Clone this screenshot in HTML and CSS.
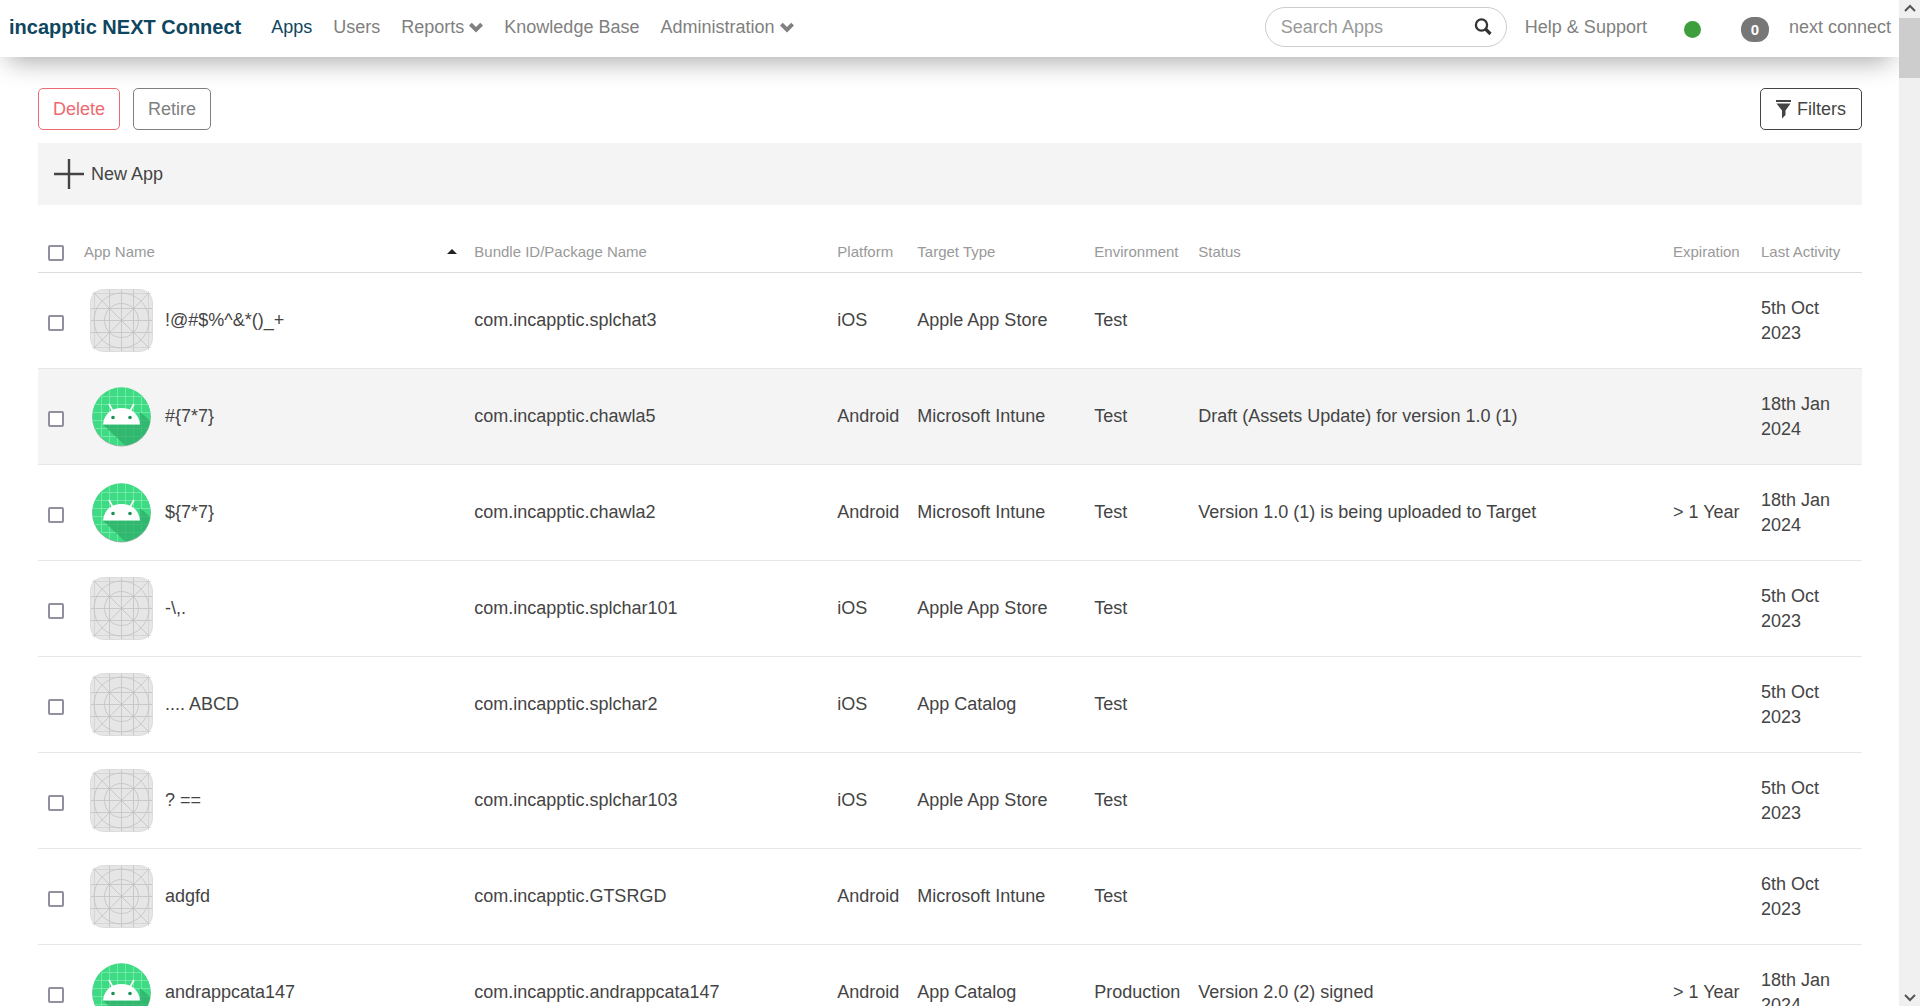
FILE: index.html
```html
<!DOCTYPE html>
<html lang="en">
<head>
  <meta charset="UTF-8">
  <meta name="viewport" content="width=device-width, initial-scale=1.0">
  <title>Apps - incapptic NEXT Connect</title>
  <link rel="stylesheet" href="styles.css">
</head>
<body>

  <!-- shared icons -->
  <svg class="sprite" aria-hidden="true">
    <symbol id="chevron" viewBox="0 0 14 11">
      <path d="M0 3.6 L2.8 0.8 L7 5 L11.2 0.8 L14 3.6 L7 10.4 Z"/>
    </symbol>
    <symbol id="placeholder" viewBox="0 0 63 63">
      <rect x="0.5" y="0.5" width="62" height="62" rx="13" fill="#e6e6e6" stroke="#dcdcdc"/>
      <g fill="none" stroke="#c2c2c2" stroke-width="0.8">
        <path d="M19.5 1V62M31.5 1V62M43.5 1V62M1 19.5H62M1 31.5H62M1 43.5H62M4 4L59 59M59 4L4 59"/>
        <path d="M4.5 2V61M58.5 2V61M2 4.5H61M2 58.5H61" stroke="#d0d0d0"/>
        <circle cx="31.5" cy="31.5" r="27.5"/>
        <circle cx="31.5" cy="31.5" r="17"/>
      </g>
    </symbol>
    <symbol id="android" viewBox="0 0 63 63">
      <circle cx="31.5" cy="32.3" r="29.3" fill="#a9aeab"/>
      <circle cx="31.5" cy="31.5" r="29.2" fill="#3ddc84"/>
      <path d="M11.5 11.5V52M19.5 5.5V58M27.5 3V60.5M35.5 3V60.5M43.5 5.5V58M51.5 11.5V52M11.5 11.5H52M5.5 19.5H58M3 27.5H60.5M3 35.5H60.5M4.5 43.5H58.5M11.5 51.5H52" stroke="#7eeab0" stroke-width="0.8" fill="none"/>
      <path d="M13 39.5L35 60.5A29.2 29.2 0 0 0 60.2 36L50 27V39.5Z" fill="#2ba866" opacity="0.7"/>
      <path d="M13 39.5C14 29 21.5 23 31.5 23S49 29 50 39.5Z" fill="#fff"/>
      <path d="M22.8 26L19 19M40.2 26L44 19" stroke="#fff" stroke-width="1.6"/>
      <circle cx="23" cy="32.5" r="1.8" fill="#1f8f57"/>
      <circle cx="40" cy="32.5" r="1.8" fill="#1f8f57"/>
    </symbol>
  </svg>

  <div class="page">
    <header class="navbar">
      <a href="#" class="brand">incapptic NEXT Connect</a>
      <nav class="menu">
        <a href="#" class="active">Apps</a>
        <a href="#">Users</a>
        <a href="#">Reports <svg class="chevron"><use href="#chevron"/></svg></a>
        <a href="#">Knowledge Base</a>
        <a href="#">Administration <svg class="chevron"><use href="#chevron"/></svg></a>
      </nav>
      <form class="search">
        <input type="text" placeholder="Search Apps" aria-label="Search Apps">
        <button type="button" aria-label="Search">
          <svg viewBox="0 0 18 18"><circle cx="7.5" cy="7" r="5.6" fill="none" stroke="#333" stroke-width="2.3"/><path d="M11.5 11L16.5 16" stroke="#333" stroke-width="3.2"/></svg>
        </button>
      </form>
      <a href="#" class="help">Help &amp; Support</a>
      <span class="dot"></span>
      <span class="badge">0</span>
      <a href="#" class="user">next connect</a>
    </header>

    <main class="content">
      <div class="toolbar">
        <button type="button" class="btn btn-delete">Delete</button>
        <button type="button" class="btn btn-retire">Retire</button>
        <button type="button" class="btn btn-filters">
          <svg viewBox="0 0 15 19"><path d="M0 0H15V2H0ZM0.5 3.5H14.5L9.5 10.5V15L6 18.5V10.5Z"/></svg>Filters
        </button>
      </div>

      <a href="#" class="new-app">
        <svg viewBox="0 0 30 30"><path d="M15 0V30M0 15H30" stroke="#444" stroke-width="2.4"/></svg>
        New App
      </a>

      <table class="apps">
        <thead>
          <tr>
            <th class="col-check"><input type="checkbox" aria-label="Select all"></th>
            <th class="col-name"><div class="sorted">App Name<span class="arrow"></span></div></th>
            <th class="col-bundle">Bundle ID/Package Name</th>
            <th class="col-platform">Platform</th>
            <th class="col-target">Target Type</th>
            <th class="col-env">Environment</th>
            <th>Status</th>
            <th class="col-exp">Expiration</th>
            <th class="col-last">Last Activity</th>
          </tr>
        </thead>
        <tbody id="rows"></tbody>
      </table>
    </main>
  </div>

  <div class="scrollbar">
    <svg viewBox="0 0 12 8"><path d="M1 7L6 2L11 7"/></svg>
    <div class="thumb"></div>
    <svg class="down" viewBox="0 0 12 8"><path d="M1 1L6 6L11 1"/></svg>
  </div>

  <script src="script.js"></script>
</body>
</html>
```

FILE: styles.css
```css
* {
  box-sizing: border-box;
}

body {
  margin: 0;
  display: flex;
  height: 100vh;
  overflow: hidden;
  font-family: "Liberation Sans", Arial, sans-serif;
  font-size: 18px;
  line-height: 25px;
  color: #444;
  background-color: #fff;
}

a {
  color: inherit;
  text-decoration: none;
}

button,
input {
  font: inherit;
  color: inherit;
}

.sprite {
  display: none;
}

.page {
  flex: 1;
  min-width: 0;
  overflow: hidden;
}

/* top bar */
.navbar {
  display: flex;
  align-items: center;
  height: 57px;
  padding: 0 8px 3px 9px;
  color: #808080;
  background-color: #fff;
  box-shadow: 0 12px 26px -8px rgba(0, 0, 0, 0.35);
  white-space: nowrap;
}

.brand {
  margin-right: 30px;
  font-size: 20px;
  font-weight: bold;
  color: #0e4660;
}

.menu {
  display: flex;
  gap: 21px;
  margin-right: auto;
}

.menu .active {
  color: #0e4660;
}

.chevron {
  width: 14px;
  height: 11px;
  fill: #808080;
}

.search {
  display: flex;
  align-items: center;
  width: 242px;
  height: 40px;
  padding: 0 14px 0 15px;
  border: 1px solid #ccc;
  border-radius: 20px;
}

.search input {
  flex: 1;
  min-width: 0;
  padding: 0;
  border: none;
  outline: none;
  background: none;
}

.search input::placeholder {
  color: #999;
  opacity: 1;
}

.search button {
  display: flex;
  padding: 0;
  border: none;
  background: none;
}

.search svg {
  width: 18px;
  height: 18px;
}

.help {
  margin-left: 18px;
}

.dot {
  width: 17px;
  height: 17px;
  margin: 4px 40px 0 37px;
  border-radius: 50%;
  background-color: #3c9e3c;
}

.badge {
  width: 28px;
  margin: 4px 20px 0 0;
  border-radius: 12px;
  font-size: 15px;
  font-weight: bold;
  text-align: center;
  color: #fff;
  background-color: #777;
}

/* content */
.content {
  padding: 31px 37px 0 38px;
}

.toolbar {
  display: flex;
  gap: 13px;
  margin-bottom: 13px;
}

.btn {
  height: 42px;
  padding: 0 14px;
  border: 1px solid;
  border-radius: 5px;
  background-color: #fff;
}

.btn-delete {
  color: #ee6a70;
}

.btn-retire {
  color: #808080;
}

.btn-filters {
  display: flex;
  align-items: center;
  gap: 6px;
  margin-left: auto;
  padding: 0 15px;
}

.btn-filters svg {
  width: 15px;
  height: 19px;
  fill: #444;
}

.new-app {
  display: flex;
  align-items: center;
  gap: 7px;
  height: 62px;
  margin-bottom: 27px;
  padding: 0 16px;
  background-color: #f4f4f4;
}

.new-app svg {
  width: 30px;
  height: 30px;
}

/* table */
.apps {
  width: 100%;
  table-layout: fixed;
  border-collapse: separate;
  border-spacing: 0;
}

.apps th {
  height: 41px;
  padding: 0 0 2px 11px;
  border-bottom: 1px solid #ddd;
  font-size: 15px;
  font-weight: normal;
  text-align: left;
  white-space: nowrap;
  color: #999;
}

.apps td {
  height: 96px;
  padding: 0 10px 0 11px;
  border-bottom: 1px solid #e7e7e7;
}

.apps tbody tr:nth-child(2) {
  background-color: #f4f4f4;
}

.apps input {
  display: block;
  appearance: none;
  width: 16px;
  height: 16px;
  margin: 4px 0 0 -1px;
  border: 2px solid #8f8f9d;
  border-radius: 2px;
  background-color: #fff;
}

.col-check {
  width: 35px;
}

.col-name {
  width: 21.4%;
}

.col-bundle {
  width: 19.9%;
}

.col-platform {
  width: 80px;
}

.col-target {
  width: 177px;
}

.col-env {
  width: 104px;
}

.col-exp {
  width: 88px;
}

.col-last {
  width: 112px;
}

.sorted {
  display: flex;
  align-items: center;
  justify-content: space-between;
}

.arrow {
  margin-right: 6px;
  border: 5px solid transparent;
  border-top: none;
  border-bottom-color: #222;
}

.app {
  display: flex;
  align-items: center;
  gap: 12px;
  padding-left: 6px;
}

.app svg {
  width: 63px;
  height: 63px;
}

/* scrollbar */
.scrollbar {
  display: flex;
  flex-direction: column;
  align-items: center;
  width: 21px;
  padding: 4px 0;
  background-color: #f0f0f0;
}

.scrollbar svg {
  width: 12px;
  height: 8px;
  fill: none;
  stroke: #555;
  stroke-width: 2;
}

.scrollbar .down {
  margin-top: auto;
}

.thumb {
  width: 100%;
  height: 60px;
  margin-top: 6px;
  background-color: #cdcdcd;
}
```

FILE: script.js
```js
const apps = [
  ['placeholder', '!@#$%^&*()_+', 'com.incapptic.splchat3', 'iOS', 'Apple App Store', 'Test', '', '', '5th Oct 2023'],
  ['android', '#{7*7}', 'com.incapptic.chawla5', 'Android', 'Microsoft Intune', 'Test', 'Draft (Assets Update) for version 1.0 (1)', '', '18th Jan 2024'],
  ['android', '${7*7}', 'com.incapptic.chawla2', 'Android', 'Microsoft Intune', 'Test', 'Version 1.0 (1) is being uploaded to Target', '> 1 Year', '18th Jan 2024'],
  ['placeholder', '-\\,.', 'com.incapptic.splchar101', 'iOS', 'Apple App Store', 'Test', '', '', '5th Oct 2023'],
  ['placeholder', '.... ABCD', 'com.incapptic.splchar2', 'iOS', 'App Catalog', 'Test', '', '', '5th Oct 2023'],
  ['placeholder', '? ==', 'com.incapptic.splchar103', 'iOS', 'Apple App Store', 'Test', '', '', '5th Oct 2023'],
  ['placeholder', 'adgfd', 'com.incapptic.GTSRGD', 'Android', 'Microsoft Intune', 'Test', '', '', '6th Oct 2023'],
  ['android', 'andrappcata147', 'com.incapptic.andrappcata147', 'Android', 'App Catalog', 'Production', 'Version 2.0 (2) signed', '> 1 Year', '18th Jan 2024']
];

const rows = document.getElementById('rows');

apps.forEach(function (app) {
  const tr = document.createElement('tr');
  tr.innerHTML = `
    <td><input type="checkbox" aria-label="Select app"></td>
    <td><div class="app"><svg><use href="#${app[0]}"/></svg><span></span></div></td>`;
  tr.querySelector('.app span').textContent = app[1];

  app.slice(2).forEach(function (text) {
    const td = document.createElement('td');
    td.textContent = text;
    tr.appendChild(td);
  });
  // keep the day and month on one line
  tr.lastChild.textContent = app[8].replace(' ', '\u00a0');
  rows.appendChild(tr);
});
```
